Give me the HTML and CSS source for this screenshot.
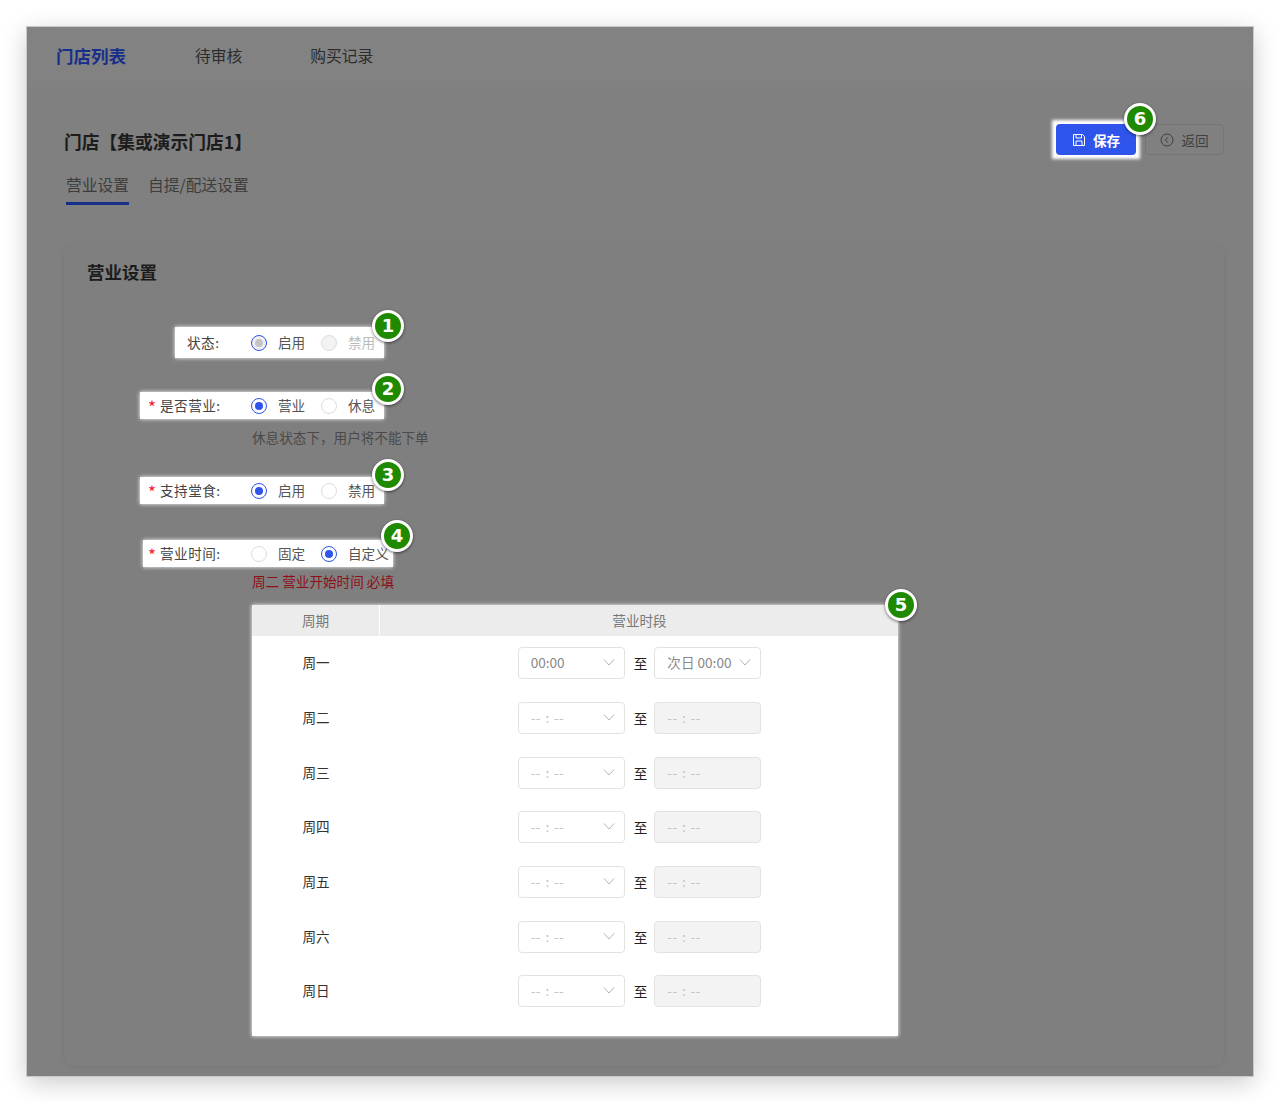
FILE: index.html
```html
<!DOCTYPE html>
<html lang="zh-CN">
<head>
<meta charset="utf-8">
<title>营业设置</title>
<link rel="stylesheet" href="styles.css">
</head>
<body>
<svg class="defs" width="0" height="0" aria-hidden="true">
  <symbol id="chev" viewBox="0 0 12 12"><path d="M1 3.500 6 9l5-5.500" fill="none" stroke="currentColor" stroke-width="1"/></symbol>
</svg>
<div class="shot">
  <nav class="topnav">
    <a class="nav-item active">门店列表</a>
    <a class="nav-item">待审核</a>
    <a class="nav-item">购买记录</a>
  </nav>
  <main class="content">
    <header class="head">
      <div class="head-left">
        <h1 class="title">门店【集或演示门店1】</h1>
        <div class="tabs">
          <a class="tab current">营业设置</a>
          <a class="tab">自提/配送设置</a>
        </div>
      </div>
      <div class="actions">
        <div class="save-wrap">
          <button class="btn btn-save">
            <svg class="btn-icon" viewBox="0 0 14 14"><path d="M1.500 1.500h9l2 2v9h-11z M4 1.500v3.500h5.500v-3.500 M4 12.500v-4.500h6v4.500" fill="none" stroke="currentColor" stroke-width="1"/></svg>
            保存
          </button>
          <span class="badge badge-6">6</span>
        </div>
        <button class="btn btn-back">
          <svg class="btn-icon" viewBox="0 0 14 14"><circle cx="7" cy="7" r="6" fill="none" stroke="currentColor" stroke-width="1"/><path d="M8 4.300 5.300 7 8 9.700" fill="none" stroke="currentColor" stroke-width="1"/></svg>
          返回
        </button>
      </div>
    </header>

    <section class="card">
      <h2 class="card-title">营业设置</h2>

      <div class="hl hl-status">
        <label class="lab lab-short">状态:</label>
        <span class="opt"><i class="radio on-disabled"></i>启用</span>
        <span class="opt muted"><i class="radio disabled"></i>禁用</span>
        <span class="badge badge-1">1</span>
      </div>

      <div class="hl hl-open">
        <label class="lab"><em>*</em>是否营业:</label>
        <span class="opt"><i class="radio on"></i>营业</span>
        <span class="opt"><i class="radio"></i>休息</span>
        <span class="badge badge-2">2</span>
      </div>
      <p class="hint">休息状态下，用户将不能下单</p>

      <div class="hl hl-dine">
        <label class="lab"><em>*</em>支持堂食:</label>
        <span class="opt"><i class="radio on"></i>启用</span>
        <span class="opt"><i class="radio"></i>禁用</span>
        <span class="badge badge-3">3</span>
      </div>

      <div class="hl hl-time">
        <label class="lab"><em>*</em>营业时间:</label>
        <span class="opt"><i class="radio"></i>固定</span>
        <span class="opt"><i class="radio on"></i>自定义</span>
        <span class="badge badge-4">4</span>
      </div>
      <p class="error">周二 营业开始时间 必填</p>

      <div class="table">
        <span class="badge badge-5">5</span>
        <div class="thead">
          <div class="th th-week">周期</div>
          <div class="th th-time">营业时段</div>
        </div>
        <div class="tr">
          <div class="td-week">周一</div>
          <div class="td-time">
            <span class="sel"><span class="val">00:00</span><svg class="chev"><use href="#chev"/></svg></span>
            <span class="to">至</span>
            <span class="sel"><span class="val">次日 00:00</span><svg class="chev"><use href="#chev"/></svg></span>
          </div>
        </div>
        <div class="tr">
          <div class="td-week">周二</div>
          <div class="td-time">
            <span class="sel"><span class="ph">-- : --</span><svg class="chev"><use href="#chev"/></svg></span>
            <span class="to">至</span>
            <span class="sel sel-off"><span class="ph">-- : --</span></span>
          </div>
        </div>
        <div class="tr">
          <div class="td-week">周三</div>
          <div class="td-time">
            <span class="sel"><span class="ph">-- : --</span><svg class="chev"><use href="#chev"/></svg></span>
            <span class="to">至</span>
            <span class="sel sel-off"><span class="ph">-- : --</span></span>
          </div>
        </div>
        <div class="tr">
          <div class="td-week">周四</div>
          <div class="td-time">
            <span class="sel"><span class="ph">-- : --</span><svg class="chev"><use href="#chev"/></svg></span>
            <span class="to">至</span>
            <span class="sel sel-off"><span class="ph">-- : --</span></span>
          </div>
        </div>
        <div class="tr">
          <div class="td-week">周五</div>
          <div class="td-time">
            <span class="sel"><span class="ph">-- : --</span><svg class="chev"><use href="#chev"/></svg></span>
            <span class="to">至</span>
            <span class="sel sel-off"><span class="ph">-- : --</span></span>
          </div>
        </div>
        <div class="tr">
          <div class="td-week">周六</div>
          <div class="td-time">
            <span class="sel"><span class="ph">-- : --</span><svg class="chev"><use href="#chev"/></svg></span>
            <span class="to">至</span>
            <span class="sel sel-off"><span class="ph">-- : --</span></span>
          </div>
        </div>
        <div class="tr">
          <div class="td-week">周日</div>
          <div class="td-time">
            <span class="sel"><span class="ph">-- : --</span><svg class="chev"><use href="#chev"/></svg></span>
            <span class="to">至</span>
            <span class="sel sel-off"><span class="ph">-- : --</span></span>
          </div>
        </div>
      </div>
    </section>
  </main>
</div>
</body>
</html>
```
FILE: styles.css
```css
* { box-sizing: border-box; }
html, body { margin: 0; padding: 0; height: 100%; overflow: hidden; background: #fff; }
body {
  padding: 27px 26px 0 27px;
  font-family: "Noto Sans CJK SC", "Liberation Sans", sans-serif;
  font-size: 13.600px;
  color: #333;
}
.defs { position: absolute; }

.shot {
  width: 1226px;
  height: 1049px;
  background: #808080;
  box-shadow: 0 0 0 1px #c9c9c9, 0 6px 24px rgba(0, 0, 0, .22);
}

.topnav {
  height: 60px;
  background: #828282;
  display: flex;
  align-items: center;
  padding: 0 0 4px 29px;
}
.nav-item { font-size: 15.750px; color: #2c2c2c; margin-right: 68px; }
.nav-item.active { font-size: 17.500px; font-weight: 700; color: #182f8a; margin-right: 69px; }

.content { padding: 0 29px 0 37px; }

.head { display: flex; justify-content: space-between; height: 157px; }
.title { margin: 41px 0 0; font-size: 17.750px; line-height: 27px; font-weight: 700; color: #1c1c1c; }
.tabs { display: flex; gap: 19px; margin-top: 14px; padding-left: 2px; }
.tab { font-size: 15.750px; line-height: 32px; height: 36px; color: #3c3c3c; }
.tab.current { border-bottom: 3px solid #182f8a; }

.actions { display: flex; gap: 9px; margin-top: 37px; align-items: flex-start; }
.save-wrap { position: relative; background: #fff; box-shadow: 0 0 3px 4px #fff; }
.btn {
  display: flex;
  align-items: center;
  justify-content: center;
  gap: 7px;
  width: 80px;
  height: 31px;
  border-radius: 4px;
  font: inherit;
  padding: 0;
}
.btn-icon { width: 14px; height: 14px; }
.btn-save {
  background: #2f54eb;
  color: #fff;
  font-weight: 700;
  border: 0;
}
.btn-back {
  width: 79px;
  background: transparent;
  border: 1px solid #757575;
  color: #3f3f3f;
}

.card {
  height: 822px;
  background: #7f7f7f;
  border-radius: 10px;
  box-shadow: 0 1px 6px rgba(0, 0, 0, .08);
  padding-top: 15px;
}
.card-title {
  margin: 0 0 42px 23px;
  font-size: 17.500px;
  line-height: 26px;
  font-weight: 700;
  color: #1c1c1c;
}

.hl {
  position: relative;
  display: flex;
  align-items: center;
  width: fit-content;
  height: 27px;
  background: #fff;
  box-shadow: 0 0 4px #fff;
  color: #555;
}
.hl-status { margin-left: 111px; padding-left: 12px; padding-right: 9px; height: 31px; }
.hl-open { margin-left: 76px; padding-left: 8px; padding-right: 9px; margin-top: 34px; }
.hl-dine { margin-left: 76px; padding-left: 8px; padding-right: 9px; margin-top: 30px; }
.hl-time { margin-left: 79px; padding-left: 5px; padding-right: 4px; margin-top: 36px; }

.lab { width: 103px; color: #444; white-space: nowrap; letter-spacing: .5px; padding-bottom: 2px; }
.lab-short { width: 64px; }
.lab em {
  display: inline-block;
  width: 12px;
  font-style: normal;
  font-size: 17px;
  line-height: 14px;
  vertical-align: -3px;
  color: #f5222d;
}

.opt { display: flex; align-items: center; gap: 11px; min-width: 70px; padding-bottom: 2px; }
.opt + .opt { min-width: 0; }
.opt.muted { color: #bbb; }
.radio {
  display: block;
  position: relative;
  width: 16px;
  height: 16px;
  margin-top: 2px;
  border-radius: 50%;
  border: 1px solid #ddd;
  background: #fff;
}
.radio.disabled { background: #f3f3f3; }
.radio.on, .radio.on-disabled { border-color: #2f54eb; }
.radio.on::after, .radio.on-disabled::after {
  content: "";
  position: absolute;
  inset: 3px;
  border-radius: 50%;
  background: #2f54eb;
}
.radio.on-disabled { background: #f1f1f1; }
.radio.on-disabled::after { background: #c4c4c4; }

.hint { margin: 8px 0 0 188px; line-height: 20px; color: #4a4a4a; }
.error { margin: 4px 0 0 188px; line-height: 20px; color: #8f0f18; }

.badge {
  position: absolute;
  width: 32px;
  height: 32px;
  border-radius: 50%;
  border: 3px solid #fff;
  background: #1f8a00;
  color: #fff;
  font-family: "DejaVu Sans", sans-serif;
  font-size: 18px;
  font-weight: 700;
  line-height: 26px;
  text-align: center;
  box-shadow: 0 1px 3px rgba(0, 0, 0, .55);
}
.badge-1 { left: 197px; top: -17px; }
.badge-2 { left: 232px; top: -19px; }
.badge-3 { left: 232px; top: -18px; }
.badge-4 { left: 238px; top: -20px; }
.badge-5 { left: 633px; top: -16px; }
.badge-6 { left: 68px; top: -21px; }

.table {
  position: relative;
  margin: 14px 0 0 188px;
  width: 646px;
  height: 431px;
  background: #fff;
  box-shadow: 0 0 4px #fff;
}
.thead { display: flex; height: 31px; background: #ececec; color: #777; padding-bottom: 1px; }
.th { display: flex; align-items: center; justify-content: center; }
.th-week { width: 128px; border-right: 1px solid #fff; }
.th-time { flex: 1; padding-left: 1px; }
.tr { display: flex; align-items: center; height: 54.700px; }
.td-week { width: 128px; text-align: center; color: #333; padding-bottom: 2px; }
.td-time { flex: 1; display: flex; align-items: center; justify-content: center; gap: 8px; padding-left: 1px; }
.sel {
  display: flex;
  align-items: center;
  justify-content: space-between;
  width: 107px;
  height: 32px;
  padding: 0 9px 2px 12px;
  background: #fff;
  border: 1px solid #e2e2e2;
  border-radius: 4px;
}
.sel-off { background: #f3f3f3; }
.val { color: #888; white-space: nowrap; }
.ph { color: #c4c4c4; white-space: nowrap; word-spacing: 1px; letter-spacing: .4px; }
.chev { width: 12px; height: 12px; color: #b5b5b5; flex: none; }
.to { color: #222; line-height: 18px; margin: 0 -1px 0 1px; }
```
